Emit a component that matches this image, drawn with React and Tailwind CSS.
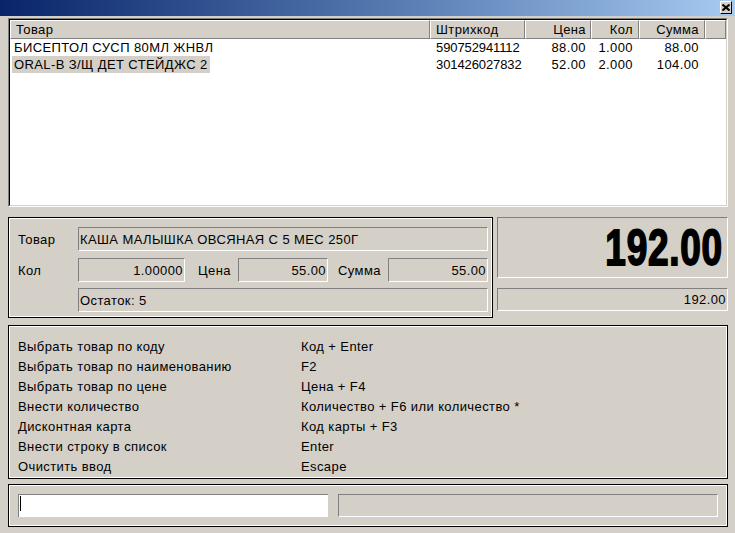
import React from "react";

const sunken = "border border-t-[#808080] border-l-[#808080] border-b-white border-r-white";
const panel = "border border-black shadow-[inset_0_0_0_1px_#ffffff]";

function Field({ className = "", children, right = false }) {
  return (
    <div className={`${sunken} flex items-center ${right ? "justify-end pr-[1px]" : "pl-[1px]"} ${className}`}>
      {children}
    </div>
  );
}

const rows = [
  { name: "БИСЕПТОЛ СУСП 80МЛ ЖНВЛ", code: "590752941112", price: "88.00", qty: "1.000", sum: "88.00", sel: false },
  { name: "ORAL-B З/Щ ДЕТ СТЕЙДЖС 2", code: "301426027832", price: "52.00", qty: "2.000", sum: "104.00", sel: true },
];

const help = [
  ["Выбрать товар по коду", "Код + Enter"],
  ["Выбрать товар по наименованию", "F2"],
  ["Выбрать товар по цене", "Цена + F4"],
  ["Внести количество", "Количество + F6 или количество *"],
  ["Дисконтная карта", "Код карты + F3"],
  ["Внести строку в список", "Enter"],
  ["Очистить ввод", "Escape"],
];

const hdr = "h-full border border-t-white border-l-white border-r-[#808080] border-b-[#808080] flex items-center";

export default function App() {
  return (
    <div className="w-[735px] h-[533px] bg-[#d4d0c8] text-black text-[13px] tracking-[0.4px] leading-none overflow-hidden font-['Liberation_Sans',Arial,sans-serif]">
      {/* title bar */}
      <div className="h-[16px] bg-linear-to-r from-[#0a246a] to-[#a6caf0] flex justify-end items-start pr-[3px] pt-[1px]">
        <div className="w-[12px] h-[13px] bg-[#d4d0c8] border border-t-white border-l-white border-r-black border-b-black flex items-center justify-center">
          <svg width="8" height="7" viewBox="0 0 8 7">
            <path d="M0.5 0.5 L7.5 6.5 M7.5 0.5 L0.5 6.5" stroke="#000" strokeWidth="2" />
          </svg>
        </div>
      </div>

      <div className="pl-[8px] pr-[7px] pt-[2px] flex flex-col">
        {/* list */}
        <div className={`h-[189px] ${sunken}`}>
          <div className="h-full border border-t-black border-l-black border-b-[#d4d0c8] border-r-[#d4d0c8] bg-white flex flex-col">
            <div className="h-[19px] flex bg-[#d4d0c8] shrink-0">
              <div className={`${hdr} w-[420px] pl-[5px]`}>Товар</div>
              <div className={`${hdr} w-[95px] pl-[5px]`}>Штрихкод</div>
              <div className={`${hdr} w-[66px] justify-end pr-[4px]`}>Цена</div>
              <div className={`${hdr} w-[48px] justify-end pr-[5px]`}>Кол</div>
              <div className={`${hdr} w-[66px] justify-end pr-[5px]`}>Сумма</div>
              <div className={`${hdr} flex-1`}></div>
            </div>
            {rows.map((r) => (
              <div key={r.code} className="h-[17px] flex items-center">
                <div className="w-[420px] pl-[2px]">
                  <span className={`inline-block px-[2px] py-[2px] ${r.sel ? "bg-[#d4d0c8]" : ""}`}>{r.name}</span>
                </div>
                <div className="w-[95px] pl-[6px] tracking-[-0.1px]">{r.code}</div>
                <div className="w-[66px] text-right pr-[5px]">{r.price}</div>
                <div className="w-[48px] text-right pr-[6px]">{r.qty}</div>
                <div className="w-[66px] text-right pr-[6px]">{r.sum}</div>
              </div>
            ))}
          </div>
        </div>

        {/* middle row */}
        <div className="mt-[10px] flex gap-[4px] h-[101px]">
          <div className={`${panel} w-[485px] h-full pl-[9px] pt-[9px] flex flex-col`}>
            <div className="flex items-center h-[24px]">
              <div className="w-[60px]">Товар</div>
              <Field className="w-[410px] h-full">КАША МАЛЫШКА ОВСЯНАЯ С 5 МЕС 250Г</Field>
            </div>
            <div className="flex items-center h-[24px] mt-[7px]">
              <div className="w-[60px]">Кол</div>
              <Field right className="w-[107px] h-full">1.00000</Field>
              <div className="w-[53px] pl-[13px]">Цена</div>
              <Field right className="w-[90px] h-full">55.00</Field>
              <div className="w-[60px] pl-[10px]">Сумма</div>
              <Field right className="w-[100px] h-full">55.00</Field>
            </div>
            <div className="flex items-center h-[24px] mt-[6px]">
              <div className="w-[60px]"></div>
              <Field className="w-[410px] h-full">Остаток: 5</Field>
            </div>
          </div>
          <div className="flex-1 flex flex-col">
            <div className={`${sunken} h-[61px] flex items-center justify-end pr-[4px] overflow-hidden`}>
              <span className="inline-block text-[50px] font-bold leading-none tracking-[1px] scale-x-[0.74] origin-right [-webkit-text-stroke:1.8px_#000]">192.00</span>
            </div>
            <Field right className="mt-[10px] h-[23px]">192.00</Field>
          </div>
        </div>

        {/* help panel */}
        <div className={`${panel} mt-[7px] h-[154px] pl-[9px] pt-[10px]`}>
          {help.map(([a, b]) => (
            <div key={a} className="flex items-center h-[20px]">
              <div className="w-[283px]">{a}</div>
              <div>{b}</div>
            </div>
          ))}
        </div>

        {/* bottom panel */}
        <div className={`${panel} mt-[5px] h-[43px] pl-[9px] pt-[9px] flex gap-[10px]`}>
          <div className="w-[310px] h-[23px] bg-white border-t border-l border-[#808080] relative">
            <div className="absolute left-[1px] top-[1px] w-[1px] h-[15px] bg-black"></div>
          </div>
          <div className={`${sunken} w-[380px] h-[23px]`}></div>
        </div>
      </div>
    </div>
  );
}
